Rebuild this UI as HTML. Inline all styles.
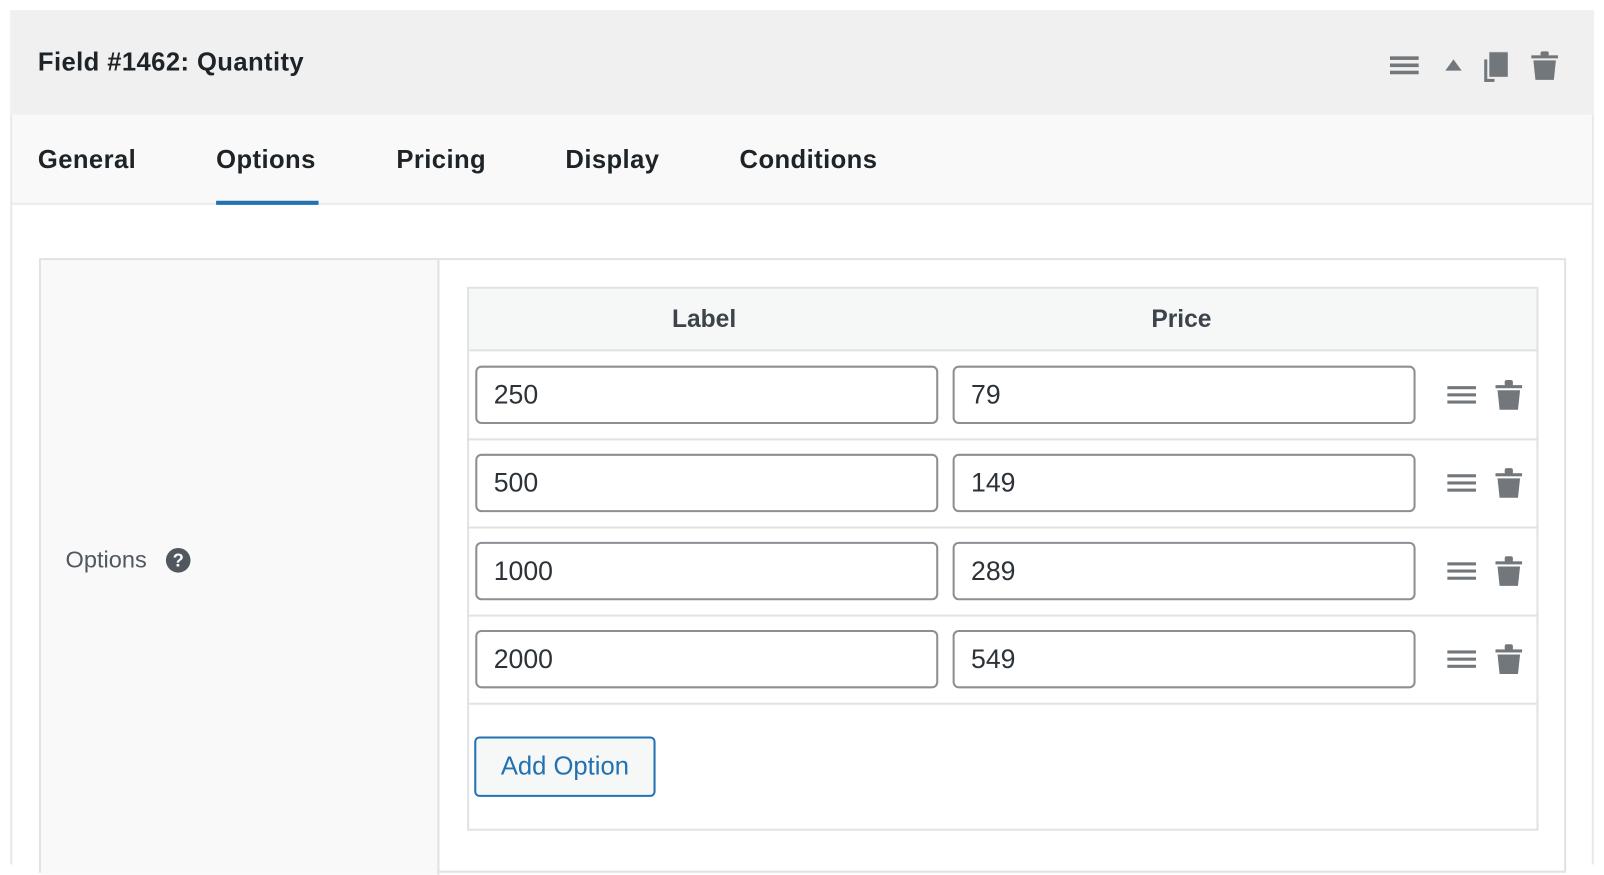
<!DOCTYPE html>
<html><head><meta charset="utf-8"><style>
*{box-sizing:border-box;margin:0;padding:0}
body{width:1604px;height:844px;background:#fff;font-family:"Liberation Sans",sans-serif;position:relative;overflow:hidden;color:#1d2327}
#w{position:absolute;left:0;top:0;width:1566px;height:824px;transform:scale(1.0243);transform-origin:0 0}
.a{position:absolute}
.inp{position:absolute;height:57px;border:2px solid #8c8f94;border-radius:6px;background:#fff;font-size:26px;padding-left:16px;line-height:53px;color:#2c3338}
.tab{position:absolute;top:142px;font-size:25px;font-weight:bold;color:#1d2327;letter-spacing:0.4px}
.sep{position:absolute;left:456px;width:1045px;height:2px;background:#e2e2e2}
</style></head><body><div id="w">
<div class="a" style="left:10px;top:10px;width:1546px;height:834px;border:2px solid #e8e8e8;border-bottom:none"></div>
<div class="a" style="left:10px;top:10px;width:1546px;height:102px;background:#f0f0f0"></div>
<div class="a" style="left:37px;top:47px;font-size:25px;font-weight:bold;letter-spacing:0.4px">Field #1462: Quantity</div>
<svg class="a" style="left:1354px;top:50px" width="170" height="32" viewBox="0 0 170 32">
<g fill="#72777c">
<rect x="3" y="5" width="28" height="3.5"/><rect x="3" y="12" width="28" height="3.5"/><rect x="3" y="19" width="28" height="3.5"/>
<polygon points="57,19 65,8 73,19"/>
<rect x="95" y="8" width="10" height="22"/><rect x="99" y="0" width="20" height="26" stroke="#f0f0f0" stroke-width="2"/>
<rect x="141" y="4" width="26" height="3"/><rect x="150" y="0" width="8" height="5" rx="2"/><path d="M143 9h22l-2 19h-18z"/>
</g></svg>
<div class="a" style="left:12px;top:112px;width:1542px;height:88px;background:#f9f9f9;border-bottom:2px solid #ececec"></div>
<div class="tab" style="left:37px">General</div>
<div class="tab" style="left:211px">Options</div>
<div class="tab" style="left:387px">Pricing</div>
<div class="tab" style="left:552px">Display</div>
<div class="tab" style="left:722px">Conditions</div>
<div class="a" style="left:211px;top:196px;width:100px;height:4px;background:#2271b1"></div>
<div class="a" style="left:38px;top:252px;width:1491px;height:600px;border:2px solid #e2e2e2"></div>
<div class="a" style="left:40px;top:254px;width:389px;height:600px;background:#f9f9f9;border-right:2px solid #e2e2e2"></div>
<div class="a" style="left:64px;top:533px;font-size:23px;color:#50575e">Options</div>
<div class="a" style="left:162px;top:535px;width:24px;height:24px;border-radius:50%;background:#50575e;color:#fff;font-size:18px;font-weight:bold;text-align:center;line-height:24px">?</div>
<div class="a" style="left:456px;top:280px;width:1046px;height:531px;border:2px solid #e2e2e2"></div>
<div class="a" style="left:458px;top:282px;width:1042px;height:61px;background:#f6f7f7;border-bottom:2px solid #e2e2e2"></div>
<div class="a" style="left:656px;top:298px;font-size:24px;font-weight:bold;color:#3c434a">Label</div>
<div class="a" style="left:1124px;top:298px;font-size:24px;font-weight:bold;color:#3c434a">Price</div>
<div class="sep" style="top:428px"></div><div class="sep" style="top:514px"></div><div class="sep" style="top:600px"></div><div class="sep" style="top:686px"></div>
<div class="inp" style="left:464px;top:357px;width:452px">250</div><div class="inp" style="left:930px;top:357px;width:452px">79</div>
<div class="inp" style="left:464px;top:443px;width:452px">500</div><div class="inp" style="left:930px;top:443px;width:452px">149</div>
<div class="inp" style="left:464px;top:529px;width:452px">1000</div><div class="inp" style="left:930px;top:529px;width:452px">289</div>
<div class="inp" style="left:464px;top:615px;width:452px">2000</div><div class="inp" style="left:930px;top:615px;width:452px">549</div>
<svg class="a" style="left:1410px;top:370px" width="80" height="320" viewBox="0 0 80 320">
<defs><g id="r" fill="#72777c"><rect x="3" y="7" width="28" height="3"/><rect x="3" y="14" width="28" height="3"/><rect x="3" y="21" width="28" height="3"/>
<rect x="50" y="6" width="26" height="3"/><rect x="59" y="1" width="8" height="6" rx="2"/><path d="M52 11h22l-2 19h-18z"/></g></defs>
<use href="#r"/><use href="#r" y="86"/><use href="#r" y="172"/><use href="#r" y="258"/>
</svg>
<div class="a" style="left:463px;top:719px;width:177px;height:59px;border:2px solid #2271b1;border-radius:5px;background:#f6f7f7;color:#2271b1;font-size:25px;text-align:center;line-height:55px">Add Option</div>
</div></body></html>
